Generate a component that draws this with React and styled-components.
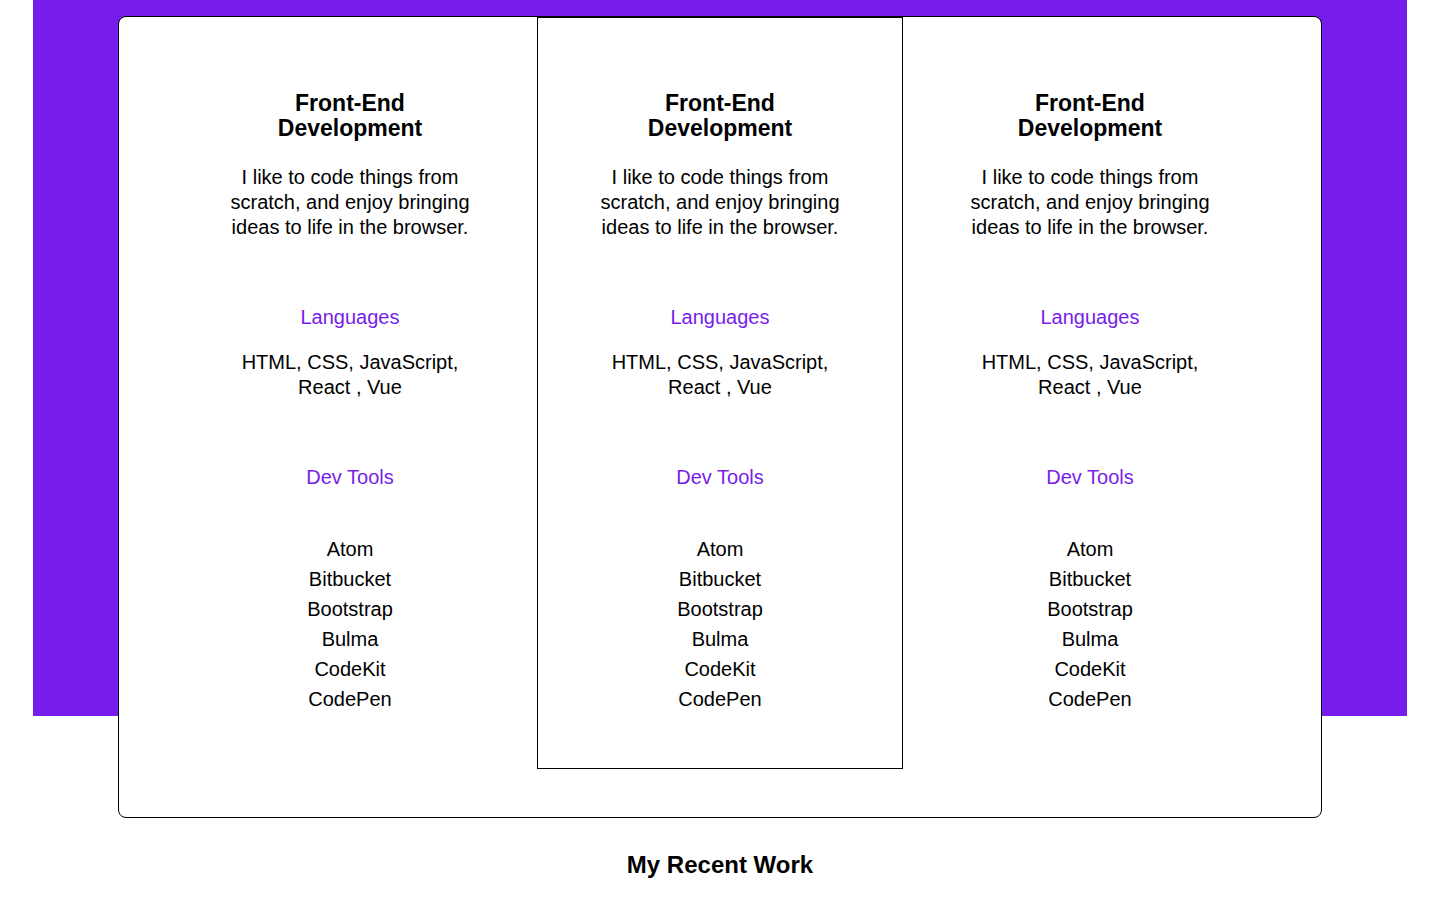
import React from "react";
import styled, { createGlobalStyle } from "styled-components";

const Global = createGlobalStyle`
  html, body { margin: 0; padding: 0; background: #fff; }
  body { font-family: "Liberation Sans", Arial, Helvetica, sans-serif; color: #000; }
  * { box-sizing: border-box; }
`;

const Band = styled.section`
  display: flex;
  flex-direction: column;
  margin: 0 33px;
  padding: 16px 85px 0;
  background: #781ceb;
`;

const Card = styled.div`
  width: 1204px;
  margin: 0 0 -102px;
  background: #fff;
  border: 1px solid #000;
  border-radius: 8px;
  padding: 0 0 48px;
  display: flex;
  justify-content: center;
  align-items: flex-start;
  gap: 4px;
`;

const Column = styled.div`
  width: 366px;
  padding: 73px 57px 54px;
  border: 1px solid ${(p) => (p.$boxed ? "#000" : "transparent")};
  text-align: center;
`;

const Title = styled.h3`
  margin: 0;
  font-size: 23px;
  line-height: 25px;
  font-weight: 700;
`;

const Text = styled.p`
  margin: ${(p) => p.$mt || 0}px 0 0;
  font-size: 20px;
  line-height: 25px;
`;

const Label = styled.p`
  margin: ${(p) => p.$mt}px 0 0;
  font-size: 20px;
  line-height: 25px;
  color: #781ceb;
`;

const ToolList = styled.ul`
  list-style: none;
  margin: 44px 0 0;
  padding: 0;
`;

const Tool = styled.li`
  font-size: 20px;
  line-height: 30px;
`;

const Section = styled.h2`
  margin: 135px 0 0;
  text-align: center;
  font-size: 24px;
  line-height: 28px;
  font-weight: 700;
`;

const tools = ["Atom", "Bitbucket", "Bootstrap", "Bulma", "CodeKit", "CodePen"];

function Skill({ boxed }) {
  return (
    <Column $boxed={boxed}>
      <Title>Front-End Development</Title>
      <Text $mt={24}>I like to code things from scratch, and enjoy bringing ideas to life in the browser.</Text>
      <Label $mt={65}>Languages</Label>
      <Text $mt={20}>HTML, CSS, JavaScript, React , Vue</Text>
      <Label $mt={65}>Dev Tools</Label>
      <ToolList>
        {tools.map((t) => (
          <Tool key={t}>{t}</Tool>
        ))}
      </ToolList>
    </Column>
  );
}

export default function App() {
  return (
    <>
      <Global />
      <Band>
        <Card>
          <Skill />
          <Skill boxed />
          <Skill />
        </Card>
      </Band>
      <Section>My Recent Work</Section>
    </>
  );
}
